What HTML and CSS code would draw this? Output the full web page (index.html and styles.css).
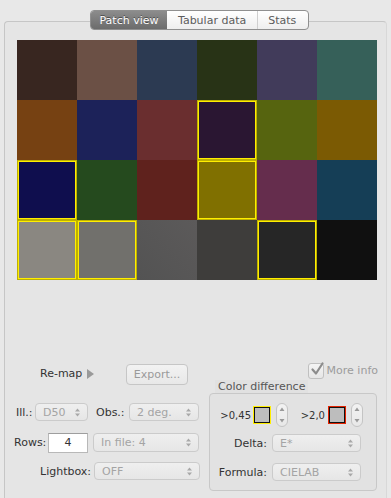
FILE: index.html
```html
<!DOCTYPE html>
<html lang="en">
<head>
    <meta charset="UTF-8">
    <title>Patch view</title>
    <link rel="stylesheet" href="styles.css">
</head>
<body>
    <div class="tabs">
        <span class="tab active">Patch view</span>
        <span class="tab">Tabular data</span>
        <span class="tab last">Stats</span>
    </div>
    <div class="panel">
        <div class="patches">
            <div class="patch" style="background:#382620"></div>
            <div class="patch" style="background:#6b5045"></div>
            <div class="patch" style="background:#2c3a52"></div>
            <div class="patch" style="background:#283316"></div>
            <div class="patch" style="background:#413b5a"></div>
            <div class="patch" style="background:#366059"></div>

            <div class="patch" style="background:#764112"></div>
            <div class="patch" style="background:#1c2259"></div>
            <div class="patch" style="background:#6a2e2f"></div>
            <div class="patch sel" style="background:#2a1632"></div>
            <div class="patch" style="background:#56640f"></div>
            <div class="patch" style="background:#7b5a03"></div>

            <div class="patch sel" style="background:#0f0e4e"></div>
            <div class="patch" style="background:#254a1e"></div>
            <div class="patch" style="background:#5f221d"></div>
            <div class="patch sel" style="background:#807000"></div>
            <div class="patch" style="background:#652d4d"></div>
            <div class="patch" style="background:#153e56"></div>

            <div class="patch sel" style="background:#8a8781"></div>
            <div class="patch sel" style="background:#71706c"></div>
            <div class="patch" style="background:linear-gradient(45deg,#535353,#5c5a5a)"></div>
            <div class="patch" style="background:#3e3d3b"></div>
            <div class="patch sel" style="background:#262626"></div>
            <div class="patch" style="background:#101010"></div>
        </div>

        <div class="controls">
            <div class="left">
                <div class="row remap-row">
                    <div class="remap">Re-map <span class="tri"></span></div>
                    <span class="btn">Export...</span>
                </div>
                <div class="row ill-row">
                    <span class="lbl ill-lbl">Ill.:</span>
                    <span class="popup w-ill">D50<svg class="arrows" width="5" height="9" viewBox="0 0 5 9"><path d="M0 3.5L2.5 0.5L5 3.5Z M0 5.5L2.5 8.5L5 5.5Z"/></svg></span>
                    <span class="lbl obs-lbl">Obs.:</span>
                    <span class="popup w-obs">2 deg.<svg class="arrows" width="5" height="9" viewBox="0 0 5 9"><path d="M0 3.5L2.5 0.5L5 3.5Z M0 5.5L2.5 8.5L5 5.5Z"/></svg></span>
                </div>
                <div class="row rows-row">
                    <span class="lbl rows-lbl">Rows:</span>
                    <span class="field">4</span>
                    <span class="popup w-file">In file: 4<svg class="arrows" width="5" height="9" viewBox="0 0 5 9"><path d="M0 3.5L2.5 0.5L5 3.5Z M0 5.5L2.5 8.5L5 5.5Z"/></svg></span>
                </div>
                <div class="row light-row">
                    <span class="lbl light-lbl">Lightbox:</span>
                    <span class="popup w-light">OFF<svg class="arrows" width="5" height="9" viewBox="0 0 5 9"><path d="M0 3.5L2.5 0.5L5 3.5Z M0 5.5L2.5 8.5L5 5.5Z"/></svg></span>
                </div>
            </div>

            <div class="right">
                <div class="more">
                    <span class="check">
                        <svg width="14" height="14" viewBox="0 0 14 14"><path d="M2.5 7.5L6 11.5L12.5 1.5" fill="none" stroke="#8c8c8c" stroke-width="2.2" stroke-linecap="round" stroke-linejoin="round"/></svg>
                    </span>
                    <span class="more-txt">More info</span>
                </div>
                <div class="legend">Color difference</div>
                <div class="group">
                    <div class="thr-row">
                        <span class="thr-lbl first">&gt;0,45</span>
                        <span class="swatch yellow"></span>
                        <span class="stepper"><svg width="12" height="24" viewBox="0 0 12 24"><path d="M3.5 8L6 4.5L8.5 8Z M3.5 16L6 19.5L8.5 16Z" fill="#9a9a9a"/></svg></span>
                        <span class="thr-lbl second">&gt;2,0</span>
                        <span class="swatch red"></span>
                        <span class="stepper"><svg width="12" height="24" viewBox="0 0 12 24"><path d="M3.5 8L6 4.5L8.5 8Z M3.5 16L6 19.5L8.5 16Z" fill="#9a9a9a"/></svg></span>
                    </div>
                    <div class="grow delta-row">
                        <span class="glbl">Delta:</span>
                        <span class="popup w-grp">E*<svg class="arrows" width="5" height="9" viewBox="0 0 5 9"><path d="M0 3.5L2.5 0.5L5 3.5Z M0 5.5L2.5 8.5L5 5.5Z"/></svg></span>
                    </div>
                    <div class="grow formula-row">
                        <span class="glbl">Formula:</span>
                        <span class="popup w-grp">CIELAB<svg class="arrows" width="5" height="9" viewBox="0 0 5 9"><path d="M0 3.5L2.5 0.5L5 3.5Z M0 5.5L2.5 8.5L5 5.5Z"/></svg></span>
                    </div>
                </div>
            </div>
        </div>
    </div>
</body>
</html>
```

FILE: styles.css
```css
body {
    margin: 0;
    padding-top: 10px;
    background-color: #e8e8e8;
    font-family: "DejaVu Sans", sans-serif;
    font-size: 11px;
    color: #333;
    height: 488px;
    overflow: hidden;
}
.tabs {
    position: relative;
    z-index: 1;
    display: flex;
    width: fit-content;
    margin-left: 90px;
    height: 20px;
    border: 1px solid #8f8f8f;
    border-radius: 4px;
    box-sizing: border-box;
    background: linear-gradient(#ffffff, #eeeeee);
    overflow: hidden;
}
.tab {
    display: flex;
    align-items: center;
    justify-content: center;
    height: 18px;
    padding: 0 11px;
    color: #5c5c5c;
    border-left: 1px solid #cfcfcf;
}
.tab.active {
    width: 76px;
    padding: 0;
    box-sizing: border-box;
    border-left: none;
    color: #fff;
    background: linear-gradient(#8c8c8c, #6c6c6c);
    text-shadow: 0 -1px 0 rgba(0, 0, 0, 0.45);
}
.tab.active + .tab {
    border-left: none;
}
.tab.last {
    padding: 0 12px 0 10px;
}
.panel {
    margin: -9px 4px 0 4px;
    height: 477px;
    border: 1px solid #c6c6c6;
    border-right-color: #d8d8d8;
    border-bottom: none;
    border-radius: 4px 4px 0 0;
    background-color: #e5e5e5;
}
.patches {
    display: grid;
    grid-template-columns: repeat(6, 60px);
    grid-template-rows: repeat(4, 60px);
    width: 360px;
    margin: 18px 0 0 12px;
}
.patch {
    box-sizing: border-box;
}
.patch.sel {
    box-shadow: inset 0 0 0 1px rgba(0, 0, 0, 0.25), inset 0 0 0 2px #ffee00;
}
.controls {
    display: flex;
    margin-top: 82px;
}
.left {
    width: 186px;
    padding-left: 9px;
}
.row {
    display: flex;
    align-items: center;
}
.remap-row {
    height: 23px;
}
.remap {
    width: 86px;
    padding-left: 26px;
    display: flex;
    align-items: center;
    color: #333;
}
.tri {
    display: inline-block;
    margin-left: 5px;
    width: 0;
    height: 0;
    border-top: 5px solid transparent;
    border-bottom: 5px solid transparent;
    border-left: 7px solid #9a9a9a;
}
.btn {
    display: flex;
    align-items: center;
    justify-content: center;
    width: 62px;
    height: 21px;
    box-sizing: border-box;
    margin-top: 2px;
    border: 1px solid #c6c6c6;
    border-radius: 4px;
    background: linear-gradient(#f2f2f2, #e8e8e8);
    color: #9a9a9a;
}
.lbl {
    color: #333;
}
.popup {
    display: flex;
    align-items: center;
    justify-content: space-between;
    height: 18px;
    box-sizing: border-box;
    padding: 0 7px 0 7px;
    border: 1px solid #cbcbcb;
    border-radius: 4px;
    background: linear-gradient(#efefef, #e6e6e6);
    color: #a4a4a4;
}
.arrows {
    fill: #a8a8a8;
}
.ill-row {
    margin-top: 18px;
    height: 18px;
}
.ill-lbl {
    margin-left: 2px;
    width: 19px;
}
.w-ill {
    width: 53px;
}
.obs-lbl {
    margin-left: 8px;
    width: 33px;
}
.w-obs {
    width: 70px;
}
.rows-row {
    margin-top: 12px;
    height: 19px;
}
.rows-lbl {
    width: 34px;
}
.field {
    display: flex;
    align-items: center;
    justify-content: center;
    width: 40px;
    height: 20px;
    box-sizing: border-box;
    border: 1px solid #b8b8b8;
    border-top-color: #9e9e9e;
    background-color: #fff;
    color: #333;
}
.w-file {
    width: 106px;
    height: 19px;
    margin-left: 5px;
}
.light-row {
    margin-top: 10px;
    height: 18px;
}
.light-lbl {
    width: 78px;
    padding-right: 3px;
    text-align: right;
}
.w-light {
    width: 107px;
}
.right {
    width: 168px;
    margin-left: 9px;
}
.more {
    display: flex;
    align-items: center;
    justify-content: flex-end;
    height: 17px;
    margin-right: -1px;
}
.check {
    display: flex;
    align-items: center;
    justify-content: center;
    width: 16px;
    height: 16px;
    box-sizing: border-box;
    border: 1px solid #c0c0c0;
    border-radius: 3px;
    background: linear-gradient(#f4f4f4, #e6e6e6);
    margin-right: 3px;
}
.check svg {
    margin-top: -4px;
    margin-right: -3px;
}
.more-txt {
    color: #9c9c9c;
    font-size: 11px;
}
.legend {
    width: fit-content;
    margin: 1px 0 0 6px;
    padding: 0 3px;
    height: 13px;
    line-height: 13px;
    background-color: #e1e1e1;
    color: #555;
}
.group {
    height: 98px;
    box-sizing: border-box;
    border: 1px solid #c8c8c8;
    border-radius: 4px;
    background-color: #e2e2e2;
    padding-top: 9px;
}
.thr-row {
    display: flex;
    align-items: center;
    height: 24px;
}
.thr-lbl {
    text-align: right;
    color: #333;
    font-size: 10px;
}
.thr-lbl.first {
    width: 41px;
    padding-right: 2px;
}
.thr-lbl.second {
    width: 37px;
    padding-right: 3px;
}
.swatch {
    width: 18px;
    height: 18px;
    box-sizing: border-box;
    border: 1px solid #ffee00;
    box-shadow: inset 0 0 0 1px #111;
    background-color: #bdbdbd;
    margin-right: 5px;
}
.swatch.red {
    border-color: #e42200;
}
.stepper {
    display: flex;
    width: 12px;
    height: 24px;
    box-sizing: border-box;
    border: 1px solid #c4c4c4;
    border-radius: 6px;
    background: linear-gradient(#f2f2f2, #e8e8e8);
    align-items: center;
    justify-content: center;
    overflow: hidden;
}
.stepper svg {
    flex: none;
}
.grow {
    display: flex;
    align-items: center;
    height: 18px;
}
.delta-row {
    margin-top: 7px;
}
.formula-row {
    margin-top: 11px;
}
.glbl {
    width: 57px;
    padding-right: 5px;
    text-align: right;
    color: #333;
}
.w-grp {
    width: 89px;
}
```
